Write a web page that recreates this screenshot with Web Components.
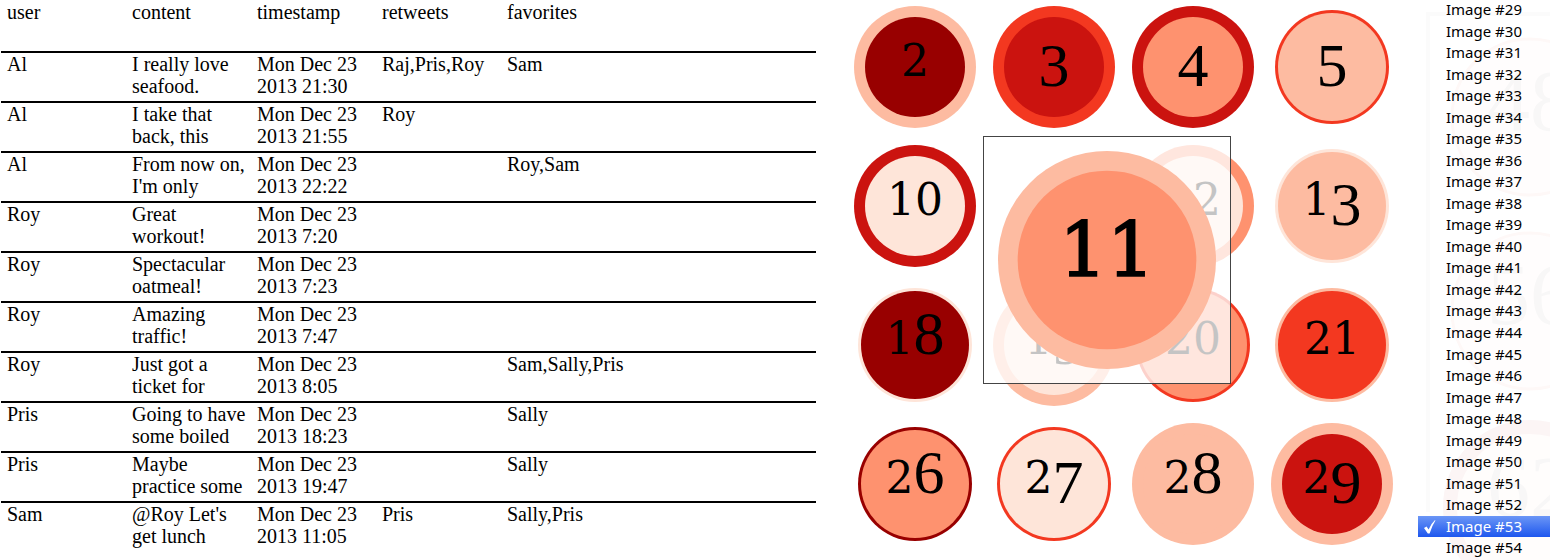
<!DOCTYPE html>
<html lang="en">
<head>
<meta charset="utf-8">
<title>Tweets and images</title>
<style>
  body { margin: 0; background: #fff; color: #000; overflow: hidden; font-family: "Liberation Serif", serif; }
</style>
</head>
<body>
<app-page>
  <tweet-table></tweet-table>
  <dot-board></dot-board>
  <image-menu first="29" last="54" selected="53"></image-menu>
</app-page>

<script>
class AppPage extends HTMLElement {
  constructor() {
    super();
    this.attachShadow({ mode: 'open' }).innerHTML = `
      <style>
        :host { display: grid; grid-template-columns: minmax(0, 1fr) auto 132px; align-items: start; height: 100vh; overflow: hidden; }
      </style>
      <slot></slot>`;
  }
}

class TweetTable extends HTMLElement {
  constructor() {
    super();
    const rows = [
      ['Al', 'I really love seafood.', 'Mon Dec 23 2013 21:30', 'Raj,Pris,Roy', 'Sam'],
      ['Al', 'I take that back, this', 'Mon Dec 23 2013 21:55', 'Roy', ''],
      ['Al', "From now on, I'm only", 'Mon Dec 23 2013 22:22', '', 'Roy,Sam'],
      ['Roy', 'Great workout!', 'Mon Dec 23 2013 7:20', '', ''],
      ['Roy', 'Spectacular oatmeal!', 'Mon Dec 23 2013 7:23', '', ''],
      ['Roy', 'Amazing traffic!', 'Mon Dec 23 2013 7:47', '', ''],
      ['Roy', 'Just got a ticket for', 'Mon Dec 23 2013 8:05', '', 'Sam,Sally,Pris'],
      ['Pris', 'Going to have some boiled', 'Mon Dec 23 2013 18:23', '', 'Sally'],
      ['Pris', 'Maybe practice some', 'Mon Dec 23 2013 19:47', '', 'Sally'],
      ['Sam', "@Roy Let's get lunch", 'Mon Dec 23 2013 11:05', 'Pris', 'Sally,Pris'],
    ];
    this.attachShadow({ mode: 'open' }).innerHTML = `
      <style>
        :host { display: block; padding-left: 1px; }
        table { width: 100%; table-layout: fixed; border-collapse: separate; border-spacing: 0; font-size: 20px; line-height: 22px; }
        col { width: 125px; }
        col:last-child { width: auto; }
        th, td { padding: 0 0 4px 6px; text-align: left; vertical-align: top; font-weight: normal; }
        th { height: 46px; padding-top: 1px; }
        td { height: 44px; border-top: 2px solid #000; }
      </style>
      <table>
        <colgroup><col><col><col><col><col></colgroup>
        <thead><tr>${['user', 'content', 'timestamp', 'retweets', 'favorites'].map(h => `<th scope="col">${h}</th>`).join('')}</tr></thead>
        <tbody>${rows.map(r => `<tr>${r.map(c => `<td>${c}</td>`).join('')}</tr>`).join('')}</tbody>
      </table>`;
  }
}

/* A numbered disc. Digits are set old-style: 0-2 at x-height, 6 and 8 rising, the rest descending. */
class NumberDot extends HTMLElement {
  connectedCallback() {
    const n = this.getAttribute('value');
    const kind = d => '012'.includes(d) ? 'mid' : '68'.includes(d) ? 'tall' : 'low';
    const [outer, inner] = this.hasAttribute('thin') ? [57, 54] : [61, 50];
    const digits = [...n].map(d => `<tspan class="${kind(d)}"${kind(d) === 'low' ? ' dy="10"' : ''}>${d}</tspan>`).join('');
    this.attachShadow({ mode: 'open' }).innerHTML = `
      <style>
        :host { display: block; width: 122px; height: 122px; }
        :host([large]) { width: 218px; height: 218px; }
        svg { display: block; width: 100%; height: 100%; }
        .mid { font: 44px "DejaVu Serif", serif; }
        .tall, .low { font: 62px "Liberation Serif", serif; }
        :host([large]) .mid { font-size: 42px; stroke: #000; stroke-width: 1px; }
      </style>
      <svg viewBox="0 0 122 122">
        <circle cx="61" cy="61" r="${outer}" fill="${this.getAttribute('ring')}"/>
        <circle cx="61" cy="61" r="${inner}" fill="${this.getAttribute('fill')}"/>
        <text x="61" y="70" text-anchor="middle">${digits}</text>
      </svg>`;
  }
}

class DotBoard extends HTMLElement {
  constructor() {
    super();
    const c = { dark: '#980000', crimson: '#cb130f', red: '#f33820', coral: '#fe926f', peach: '#fdbba1', cream: '#fee5d9' };
    const dots = [
      [2, 'dark', 'peach'], [3, 'crimson', 'red'], [4, 'coral', 'crimson'], [5, 'peach', 'red', 'thin'],
      [10, 'cream', 'crimson'], [11, 'coral', 'peach'], [12, 'cream', 'coral'], [13, 'peach', 'cream', 'thin'],
      [18, 'dark', 'cream', 'thin'], [19, 'cream', 'peach'], [20, 'coral', 'red', 'thin'], [21, 'red', 'peach', 'thin'],
      [26, 'coral', 'dark', 'thin'], [27, 'cream', 'red', 'thin'], [28, 'peach', 'peach'], [29, 'crimson', 'peach'],
    ];
    const dot = ([n, f, r, t = '']) => n === 11 ? '<span></span>' : `<number-dot value="${n}" fill="${c[f]}" ring="${c[r]}" ${t}></number-dot>`;
    this.attachShadow({ mode: 'open' }).innerHTML = `
      <style>
        :host { display: block; padding: 6px 25px 0 38px; }
        .grid { position: relative; display: grid; grid-template-columns: repeat(4, 122px); grid-auto-rows: 122px; gap: 17px; }
        .lens { position: absolute; left: 129px; top: 130px; box-sizing: border-box; width: 248px; height: 248px;
                display: grid; place-items: center; border: 1px solid #444; background: rgba(255, 255, 255, .77); }
      </style>
      <div class="grid">${dots.map(dot).join('')}
        <div class="lens"><number-dot large value="11" fill="${c.coral}" ring="${c.peach}"></number-dot></div>
      </div>`;
  }
}

class ImageMenu extends HTMLElement {
  connectedCallback() {
    const first = +this.getAttribute('first'), last = +this.getAttribute('last'), sel = +this.getAttribute('selected');
    let options = '';
    for (let i = first; i <= last; i++) options += `<option${i === sel ? ' selected' : ''}>Image #${i}</option>`;
    this.attachShadow({ mode: 'open' }).innerHTML = `
      <style>
        :host { display: block; position: relative; overflow: hidden; height: 100vh; }
        svg { position: absolute; inset: 0; width: 100%; height: 100%; }
        select { position: relative; display: block; width: 100%; height: 100%; margin: -1px 0 0; padding: 0; border: 0; border-radius: 0; outline: 0;
                 background: transparent; overflow: hidden; scrollbar-width: none; font: 15px "Noto Sans", sans-serif; color: #000; }
        option { box-sizing: border-box; height: calc(100vh / ${last - first + 1}); min-height: 0; padding: 0 0 0 28px;
                 line-height: 14px; color: #000; }
        option:checked { color: #fff; -webkit-text-fill-color: #fff;
          background: url("data:image/svg+xml,%3Csvg xmlns='http://www.w3.org/2000/svg' width='12' height='14'%3E%3Cpath d='M0 8 L2.6 6.4 L4.6 9.6 Q7 3.6 11 0 L11.4 .6 Q8 6 5.6 13.4 L3.8 13.4 Z' fill='white'/%3E%3C/svg%3E") 6px 4px no-repeat,
            linear-gradient(#6b96f6, #1e57ee) #1e57ee; }
      </style>
      <svg aria-hidden="true" fill="none">
        <path d="M10 512V14H132" stroke="#fbfbfb" stroke-width="4"/>
        <g stroke="#fef8f7" stroke-width="3" fill="#fffdfd">
          <circle cx="112" cy="117" r="78"/><circle cx="112" cy="311" r="78"/>
        </g>
        <circle cx="112" cy="507" r="80" stroke="#fcf5f5" stroke-width="14" fill="#fffdfc"/>
        <g font-family="Liberation Serif, serif" font-size="86" fill="#f8f7f7">
          <text x="69" y="130">48</text><text x="69" y="324">56</text><text x="69" y="516">62</text>
        </g>
      </svg>
      <select size="${last - first + 1}" aria-label="Image">${options}</select>`;
  }
}

customElements.define('app-page', AppPage);
customElements.define('tweet-table', TweetTable);
customElements.define('number-dot', NumberDot);
customElements.define('dot-board', DotBoard);
customElements.define('image-menu', ImageMenu);
</script>
</body>
</html>
